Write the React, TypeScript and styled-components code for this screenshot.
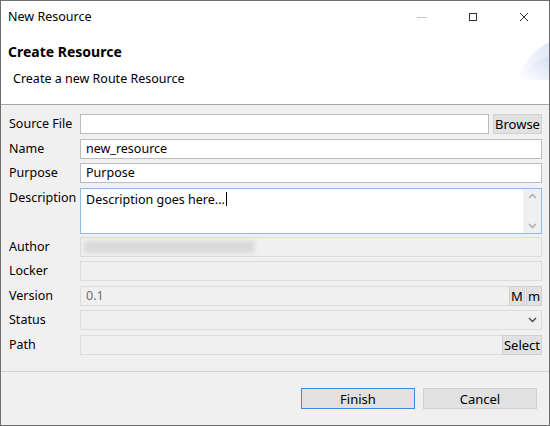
import React from "react";
import styled, { createGlobalStyle } from "styled-components";

const GlobalStyle = createGlobalStyle`
  html, body {
    margin: 0;
    padding: 0;
    background: #ffffff;
  }
  * {
    box-sizing: border-box;
  }
`;

const Window = styled.div`
  width: 550px;
  height: 426px;
  border: 1px solid #6f6f6f;
  background: #f0f0f0;
  display: flex;
  flex-direction: column;
  font-family: "Noto Sans", "Open Sans", sans-serif;
  font-size: 12.5px;
  color: #000;
`;

const TitleBar = styled.div`
  height: 31px;
  background: #ffffff;
  display: flex;
  align-items: center;
  padding-left: 7px;
`;

const TitleText = styled.div`
  flex: 1;
`;

const WinButton = styled.div`
  width: 51px;
  height: 31px;
  display: flex;
  align-items: center;
  justify-content: center;
`;

const Header = styled.div`
  position: relative;
  height: 73px;
  background: #ffffff;
  border-bottom: 1px solid #a8a8a8;
  padding: 10px 7px 0;
  overflow: hidden;
`;

const HeaderTitle = styled.div`
  font-weight: bold;
  font-size: 14px;
  line-height: 20px;
`;

const HeaderSub = styled.div`
  margin-top: 9px;
  padding-left: 5px;
  line-height: 16px;
`;

const Banner = styled.svg`
  position: absolute;
  right: 0;
  top: 0;
`;

const Body = styled.div`
  flex: 1;
  padding: 9px 7px 0 7px;
  display: grid;
  grid-template-columns: 72px 1fr;
  grid-auto-rows: 20px;
  row-gap: 4.5px;
  align-content: start;
`;

const Label = styled.div`
  line-height: 20px;
  white-space: nowrap;
  align-self: start;
  padding-left: 1px;
`;

const Field = styled.div<{ $disabled?: boolean; $focus?: boolean }>`
  position: relative;
  height: 100%;
  background: ${({ $disabled }) => ($disabled ? "#f0f0f0" : "#ffffff")};
  border: 1px solid
    ${({ $disabled, $focus }) =>
      $focus ? "#8cbde9" : $disabled ? "#dcdcdc" : "#bcbcbc"};
  color: ${({ $disabled }) => ($disabled ? "#6d6d6d" : "#000")};
  padding-left: 5px;
  line-height: 18px;
  display: flex;
  align-items: center;
  min-width: 0;
`;

const FieldRow = styled.div`
  display: flex;
  gap: 4px;
  min-width: 0;
`;

const SmallButton = styled.div<{ $w: number }>`
  width: ${({ $w }) => $w}px;
  height: 100%;
  background: #e1e1e1;
  border: 1px solid #d0d0d0;
  color: #000;
  display: flex;
  align-items: center;
  justify-content: center;
  font-size: 13px;
`;

const MiniButtons = styled.div`
  position: absolute;
  right: -1px;
  top: -1px;
  bottom: -1px;
  display: flex;
  gap: 1px;
`;

const TextAreaBox = styled(Field)`
  grid-row: span 2;
  height: 46px;
  align-items: flex-start;
  padding-top: 2px;
`;

const Caret = styled.span`
  display: inline-block;
  width: 1px;
  height: 14px;
  background: #000;
  margin-left: 1px;
  vertical-align: -2px;
`;

const ScrollBar = styled.div`
  position: absolute;
  right: 0;
  top: 0;
  bottom: 0;
  width: 18px;
  background: #f0f0f0;
  display: flex;
  flex-direction: column;
  justify-content: space-between;
  align-items: center;
  padding: 4px 0;
`;

const Blurred = styled.div`
  width: 170px;
  height: 12px;
  background: #d9d9d9;
  filter: blur(2px);
  margin-left: -2px;
`;

const ComboArrow = styled.div`
  position: absolute;
  right: 0;
  top: 0;
  bottom: 0;
  width: 18px;
  display: flex;
  align-items: center;
  justify-content: center;
`;

const Footer = styled.div`
  height: 54px;
  border-top: 1px solid #d0d0d0;
  display: flex;
  justify-content: flex-end;
  align-items: flex-start;
  padding: 16px 12px 0 0;
  gap: 8px;
`;

const DialogButton = styled.div<{ $primary?: boolean }>`
  width: 114px;
  height: 21px;
  background: #e1e1e1;
  border: 1px solid ${({ $primary }) => ($primary ? "#3b8fd8" : "#d0d0d0")};
  display: flex;
  align-items: center;
  justify-content: center;
  font-size: 13px;
`;

const Chevron = ({ up, color = "#a8a8a8" }: { up?: boolean; color?: string }) => (
  <svg width="9" height="6" viewBox="0 0 9 6">
    <path
      d={up ? "M1 5 L4.5 1.5 L8 5" : "M1 1 L4.5 4.5 L8 1"}
      fill="none"
      stroke={color}
      strokeWidth="1.3"
    />
  </svg>
);

export default function App() {
  return (
    <>
      <GlobalStyle />
      <Window>
        <TitleBar>
          <TitleText>New Resource</TitleText>
          <WinButton>
            <svg width="10" height="10" viewBox="0 0 10 10">
              <line x1="0" y1="5.5" x2="10" y2="5.5" stroke="#c8c8c8" strokeWidth="1" />
            </svg>
          </WinButton>
          <WinButton>
            <svg width="10" height="10" viewBox="0 0 10 10">
              <rect x="1.5" y="1.5" width="7" height="7" fill="none" stroke="#333" strokeWidth="1" />
            </svg>
          </WinButton>
          <WinButton>
            <svg width="10" height="10" viewBox="0 0 10 10">
              <path d="M1 1 L9 9 M9 1 L1 9" stroke="#333" strokeWidth="1" />
            </svg>
          </WinButton>
        </TitleBar>
        <Header>
          <HeaderTitle>Create Resource</HeaderTitle>
          <HeaderSub>Create a new Route Resource</HeaderSub>
          <Banner width="80" height="60" viewBox="0 0 80 60">
            <defs>
              <linearGradient id="bg1" x1="0" y1="1" x2="1" y2="0">
                <stop offset="0" stopColor="#ffffff" />
                <stop offset="1" stopColor="#d6e0f5" />
              </linearGradient>
              <linearGradient id="bg2" x1="0" y1="1" x2="1" y2="0">
                <stop offset="0" stopColor="#ffffff" />
                <stop offset="1" stopColor="#dfe6f7" />
              </linearGradient>
            </defs>
            <path d="M48 48 C56 28 66 18 80 10 L80 48 Z" fill="url(#bg2)" />
            <path d="M52 48 C60 34 68 28 80 24 L80 48 Z" fill="url(#bg1)" />
          </Banner>
        </Header>
        <Body>
          <Label>Source File</Label>
          <FieldRow>
            <Field style={{ flex: 1 }} />
            <SmallButton $w={49}>Browse</SmallButton>
          </FieldRow>

          <Label>Name</Label>
          <Field>new_resource</Field>

          <Label>Purpose</Label>
          <Field>Purpose</Field>

          <Label>Description</Label>
          <TextAreaBox $focus>
            <span>
              Description goes here...
              <Caret />
            </span>
            <ScrollBar>
              <Chevron up />
              <Chevron />
            </ScrollBar>
          </TextAreaBox>
          <div />

          <Label>Author</Label>
          <Field $disabled>
            <Blurred />
          </Field>

          <Label>Locker</Label>
          <Field $disabled />

          <Label>Version</Label>
          <Field $disabled>
            0.1
            <MiniButtons>
              <SmallButton $w={16}>M</SmallButton>
              <SmallButton $w={16}>m</SmallButton>
            </MiniButtons>
          </Field>

          <Label>Status</Label>
          <Field $disabled>
            <ComboArrow>
              <Chevron color="#444" />
            </ComboArrow>
          </Field>

          <Label>Path</Label>
          <Field $disabled>
            <MiniButtons>
              <SmallButton $w={40}>Select</SmallButton>
            </MiniButtons>
          </Field>
        </Body>
        <Footer>
          <DialogButton $primary>Finish</DialogButton>
          <DialogButton>Cancel</DialogButton>
        </Footer>
      </Window>
    </>
  );
}
